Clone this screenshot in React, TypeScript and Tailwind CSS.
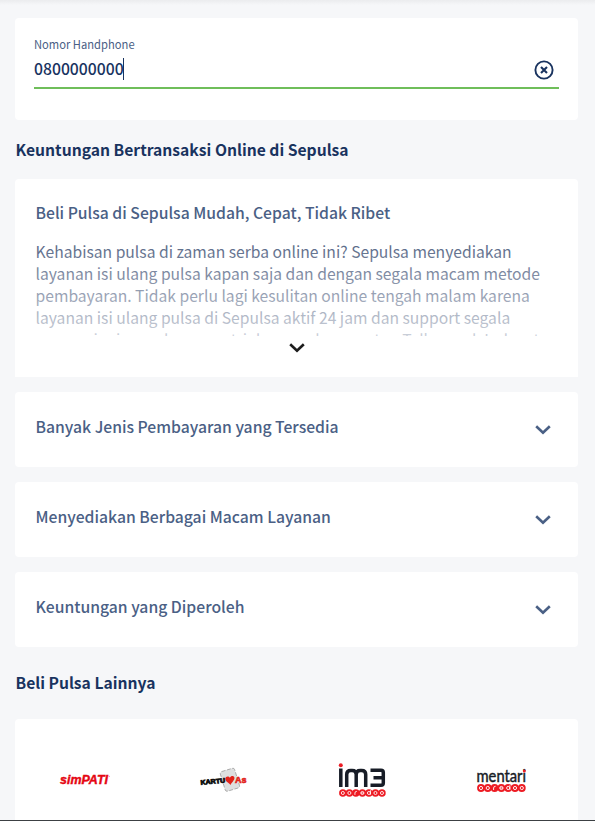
import { ReactNode } from "react";

function Chevron({ className }: { className: string }) {
  return (
    <svg viewBox="0 0 16 10" fill="none" stroke="currentColor" strokeWidth="2.6" className={className}>
      <path d="M1.2 1.2 8 7.8l6.8-6.6" />
    </svg>
  );
}

function SectionTitle({ children }: { children: ReactNode }) {
  return <h2 className="pl-[0.5px] text-[15.66px] leading-[24px] font-bold text-[#19335f]">{children}</h2>;
}

function AccordionRow({ title }: { title: string }) {
  return (
    <button className="flex h-[75px] w-full items-center justify-between rounded-[4px] bg-white pr-[27px] pb-[6px] pl-[20.5px] text-left text-[#4a6085]">
      <span className="text-[15.72px] leading-[24px] font-medium">{title}</span>
      <Chevron className="mt-[6px] h-[10px] w-[16px]" />
    </button>
  );
}

function OoredooBadge({ className }: { className: string }) {
  return (
    <svg viewBox="0 0 49 8" className={className}>
      {[4, 10.8, 17.6, 24.4, 31.2, 38, 44.8].map((x, i) => (
        <g key={x}>
          <circle cx={x} cy="4" r="3.9" fill="#ed1c24" />
          {i === 2 ? (
            <path d={`M${x - 1} 6V4q0-1.7 2-1.7`} fill="none" stroke="#fff" strokeWidth=".9" />
          ) : (
            <circle cx={x} cy="4" r="1.600" fill="none" stroke="#fff" strokeWidth=".9" />
          )}
          {i === 3 && <path d={`M${x - 1.7} 4h3.4`} stroke="#fff" strokeWidth=".8" />}
          {i === 4 && <path d={`M${x + 1.7} 1.2v4.6`} stroke="#fff" strokeWidth=".9" />}
        </g>
      ))}
    </svg>
  );
}

function SimpatiLogo() {
  return (
    <svg viewBox="0 0 52 16" className="h-[16px] w-[52px] overflow-visible">
      <text x="1" y="12.200" textLength="48" lengthAdjust="spacingAndGlyphs" fill="#e50613" stroke="#e50613" strokeWidth=".4" className="font-['Liberation_Sans',sans-serif] text-[12px] font-bold italic">simPATI</text>
      <circle cx="50.300" cy="4.300" r=".6" fill="#f3949a" />
    </svg>
  );
}

function KartuAsLogo() {
  return (
    <svg viewBox="0 0 50 28" className="h-[28px] w-[50px] overflow-visible">
      <g transform="rotate(-17 31 14)">
        <rect x="23.500" y="3.500" width="15" height="20.500" rx="2" fill="#dedfdf" stroke="#8a8a8a" strokeWidth=".6" strokeDasharray="4 1.500" />
      </g>
      <g transform="rotate(-5 12 15)">
        <text x="1.500" y="17.800" textLength="24.500" lengthAdjust="spacingAndGlyphs" fill="#111" stroke="#111" strokeWidth=".8" className="font-['Liberation_Sans',sans-serif] text-[6.500px] font-bold">KARTU</text>
      </g>
      <path d="M31.500 19c-2-2.200-5.400-3.700-5.200-6.400.3-2.400 3.500-2.700 4.600-.8.9-2.300 4-2.500 4.500-.2.500 2.700-2.700 4.900-3.900 7.400Z" fill="#e2231a" />
      <text x="36" y="16.800" textLength="11.500" lengthAdjust="spacingAndGlyphs" fill="#e2231a" stroke="#e2231a" strokeWidth=".6" className="font-['Liberation_Sans',sans-serif] text-[9px] font-bold">As</text>
    </svg>
  );
}

function Im3Logo() {
  return (
    <svg viewBox="0 0 49 24" className="h-[24px] w-[49px]">
      <circle cx="2.800" cy="2.300" r="2" fill="#ed1c24" />
      <g fill="none" stroke="#171c26" strokeWidth="3.500">
        <path d="M2.800 5.500v18.500" />
        <path d="M8.700 24V11.500q0-4 4-4h1.500q4 0 4 4V24M18.200 11.500q0-4 4-4h1.500q4 0 4 4V24" />
        <path d="M32.500 7.300h10.500q2.300 0 2.300 2.300v10.300q0 2.300-2.300 2.300H32.500M35.500 14.700h9.500" />
      </g>
    </svg>
  );
}

function MentariLogo() {
  return (
    <svg viewBox="0 0 50 15" className="h-[15px] w-[50px] overflow-visible">
      <text x="-.5" y="13" textLength="49.500" lengthAdjust="spacingAndGlyphs" fill="#171c26" stroke="#171c26" strokeWidth=".45" className="font-['Lato',sans-serif] text-[16.500px]">mentari</text>
      <circle cx="47.300" cy="2" r="1.500" fill="#ed1c24" />
    </svg>
  );
}

export default function App() {
  return (
    <div className="relative h-[821px] overflow-hidden bg-[#f6f7f9] pr-[17px] pl-[15px] font-['Noto_Sans_CJK_SC',sans-serif]">
      <div className="absolute inset-x-0 top-0 h-[5px] bg-linear-to-b from-[#ebecee] to-[#f6f7f9]" />
      <main className="flex flex-col pt-[18px]">
        <section className="h-[102px] rounded-[4px] bg-white pt-[18px] pr-[19px] pl-[19px]">
          <div className="h-[53px] border-b-2 border-[#6fbe5a]">
            <p className="text-[11.200px] leading-[16px] text-[#4a6085]">Nomor Handphone</p>
            <div className="flex h-[36px] items-center justify-between pr-[5px]">
              <div className="flex items-center text-[#19335f]">
                <span className="-mt-[3px] text-[15.72px] leading-[24px] font-medium">0800000000</span>
                <span className="-ml-px h-[22px] w-px -translate-y-px bg-[#19335f]" />
              </div>
              <svg viewBox="0 0 20 20" fill="none" stroke="#19335f" strokeWidth="1.900" className="h-[20px] w-[20px]">
                <circle cx="10" cy="10" r="8.600" />
                <path d="m7 7 6 6m0-6-6 6" strokeWidth="2.100" />
              </svg>
            </div>
          </div>
        </section>

        <div className="mt-[18px]">
          <SectionTitle>Keuntungan Bertransaksi Online di Sepulsa</SectionTitle>
        </div>

        <section className="mt-[17px] flex h-[198px] flex-col items-center rounded-t-[4px] bg-white px-[20.5px] pt-[22px]">
          <h3 className="w-full text-[15.72px] leading-[24px] font-medium text-[#4a6085]">Beli Pulsa di Sepulsa Mudah, Cepat, Tidak Ribet</h3>
          <div className="relative mt-[16px] h-[95px] w-full overflow-hidden text-[15.67px] leading-[22px] whitespace-nowrap text-[#4f6080]">
            <p>Kehabisan pulsa di zaman serba online ini? Sepulsa menyediakan</p>
            <p>layanan isi ulang pulsa kapan saja dan dengan segala macam metode</p>
            <p>pembayaran. Tidak perlu lagi kesulitan online tengah malam karena</p>
            <p>layanan isi ulang pulsa di Sepulsa aktif 24 jam dan support segala</p>
            <p>macam jenis pembayaran, tri dan segala operator. Telkomsel, Indosat</p>
            <div className="absolute inset-0 bg-linear-to-b from-white/5 to-white/70" />
          </div>
          <Chevron className="mt-[7px] h-[10px] w-[16px] text-[#1d1d1d]" />
        </section>

        <div className="mt-[15px] flex flex-col gap-[15px]">
          <AccordionRow title="Banyak Jenis Pembayaran yang Tersedia" />
          <AccordionRow title="Menyediakan Berbagai Macam Layanan" />
          <AccordionRow title="Keuntungan yang Diperoleh" />
        </div>

        <div className="mt-[24px]">
          <SectionTitle>Beli Pulsa Lainnya</SectionTitle>
        </div>

        <section className="mt-[24px] grid h-[124px] grid-cols-4 items-center justify-items-center rounded-t-[4px] bg-white pr-[7px] pb-[2px]">
          <SimpatiLogo />
          <KartuAsLogo />
          <div className="flex flex-col items-center">
            <Im3Logo />
            <OoredooBadge className="mt-[2px] h-[8px] w-[47px]" />
          </div>
          <div className="flex flex-col items-center">
            <MentariLogo />
            <OoredooBadge className="h-[8px] w-[49px]" />
          </div>
        </section>
      </main>
      <div className="absolute inset-x-0 bottom-0 h-px bg-[#3c4043]" />
    </div>
  );
}
